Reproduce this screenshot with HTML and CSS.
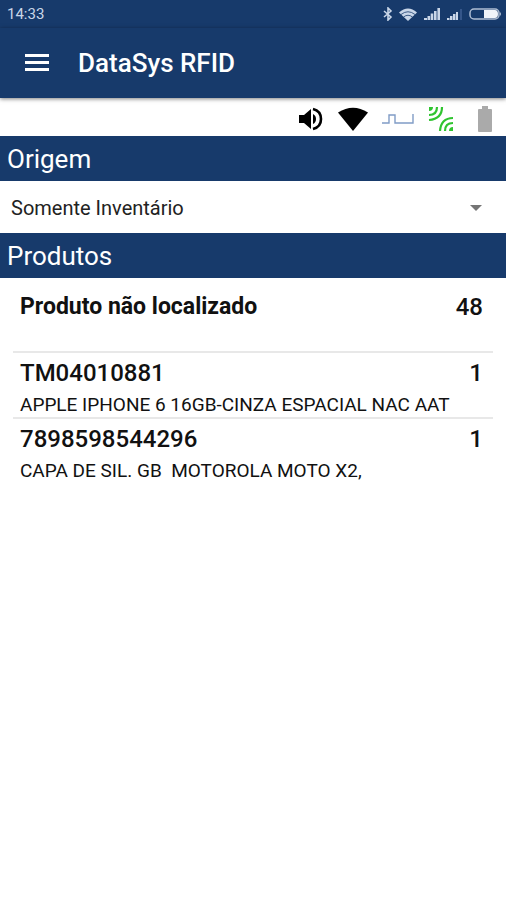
FILE: index.html
```html
<!DOCTYPE html>
<html lang="pt-BR">
    <head>
        <meta charset="UTF-8">
        <meta name="viewport" content="width=device-width, initial-scale=1">
        <title>DataSys RFID</title>
        <link rel="stylesheet" href="styles.css">
    </head>
    <body>
        <div class="statusbar">
            <span>14:33</span>
            <div class="status-icons">
                <svg width="10" height="14" viewBox="0 0 10 14"><path d="M1 4l7 6-3 3V1l3 3-7 6" fill="none" stroke="#c9d6e8" stroke-width="1.6"/></svg>
                <svg class="status-wifi" width="18" height="13" viewBox="0 0 18 13"><path d="M0 4.500Q9-3.500 18 4.500L9 13z" fill="#c9d6e8"/><path d="M2 6.500q7-5.500 14 0M4.500 9q4.500-3.500 9 0" fill="none" stroke="#173a6b" stroke-width="0.8"/></svg>
                <svg class="status-signal" width="17" height="12" viewBox="0 0 17 12"><path d="M0 10h3v2H0zM3.500 8h2.600v4H3.500zM6.700 5.500h2.600v6.500H6.700zM10 3h2.600v9H10zM13.400 0H16v12h-2.600z" fill="#c9d6e8"/></svg>
                <svg class="status-signal2" width="16" height="12" viewBox="0 0 16 12"><path d="M0 10h2.500v2H0zM3 8h2.500v4H3zM6 6h2.500v6H6zM9 4h2v8H9z" fill="#c9d6e8"/><path d="M13 1h2v11h-2z" fill="#35568a"/></svg>
                <svg class="status-battery" width="33" height="12" viewBox="0 0 33 12"><rect x="1" y="1" width="29" height="10" rx="4" fill="none" stroke="#aebdd3" stroke-width="1.500"/><path d="M15 2h11q3 0 3 4t-3 4H15z" fill="#f0f4fa"/><path d="M31 4q2 2 0 4z" fill="#aebdd3"/></svg>
            </div>
        </div>
        <header class="appbar">
            <button class="menu" type="button" aria-label="Menu">
                <svg width="26" height="18" viewBox="0 0 26 18"><path d="M1 1.500h24M1 8.500h24M1 15.500h24" stroke="#fff" stroke-width="2.800"/></svg>
            </button>
            <h1>DataSys RFID</h1>
        </header>
        <div class="reader">
            <svg width="26" height="24" viewBox="0 0 26 24"><path d="M1 8h5l7-6v20l-7-6H1z"/><path d="M15 7q3 1.500 3 5t-3 5z"/><path d="M15 2q8 2 8 10t-8 10" fill="none" stroke="#000" stroke-width="2.600"/></svg>
            <svg width="30" height="24" viewBox="0 0 30 24"><path d="M0 5.500Q15-4 30 5.500L15 24z"/></svg>
            <svg width="32" height="12" viewBox="0 0 32 12"><path d="M0 10h7V2h6v8h18V1" fill="none" stroke="#809cc6" stroke-width="1.400"/></svg>
            <svg width="26" height="26" viewBox="0 0 26 26"><g fill="none" stroke="#2fc42f" stroke-width="2.200"><path d="M1 9q8 0 8-8M1 14q13-1 13-13M12 25q1-13 13-13M17 25q0-8 8-8"/></g><path d="M1 1h4q0 4-4 4zM25 25h-4q0-4 4-4z" fill="#2fc42f"/></svg>
            <svg width="14" height="26" viewBox="0 0 14 26"><path d="M4 0h6v3h3q1 0 1 1v21q0 1-1 1H1q-1 0-1-1V4q0-1 1-1h3z" fill="#aaa"/></svg>
        </div>
        <main>
            <h2><label for="origem">Origem</label></h2>
            <div class="spinner">
                <select id="origem">
                    <option>Somente Inventário</option>
                </select>
            </div>
            <h2>Produtos</h2>
            <ul class="produtos">
                <li>
                    <div class="codigo"><span class="aviso">Produto não localizado</span><span>48</span></div>
                    <p></p>
                </li>
                <li>
                    <div class="codigo"><span>TM04010881</span><span>1</span></div>
                    <p>APPLE IPHONE 6 16GB-CINZA ESPACIAL NAC AAT</p>
                </li>
                <li>
                    <div class="codigo"><span>7898598544296</span><span>1</span></div>
                    <p>CAPA DE SIL. GB  MOTOROLA MOTO X2,</p>
                </li>
            </ul>
        </main>
    </body>
</html>
```
FILE: styles.css
```css
* {
    box-sizing: border-box;
}

body {
    margin: 0;
    background: #fff;
    color: #111;
    font-family: Roboto, "Liberation Sans", sans-serif;
}

svg {
    display: block;
}

.statusbar {
    display: flex;
    justify-content: space-between;
    align-items: center;
    height: 28px;
    padding: 0 4px 0 7px;
    background: #173a6b;
    color: #c9d6e8;
    font-size: 15px;
}

.status-icons {
    display: flex;
    align-items: center;
}

.status-wifi {
    margin-left: 6px;
}

.status-signal {
    margin-left: 7px;
}

.status-signal2 {
    margin-left: 6px;
}

.status-battery {
    margin-left: 6px;
}

.appbar {
    position: relative;
    display: flex;
    align-items: center;
    gap: 28px;
    height: 70px;
    padding: 0 24px;
    background: #173a6b;
    color: #fff;
    box-shadow: 0 1px 4px rgba(0,0,0,0.5);
}

.menu {
    padding: 0;
    border: 0;
    background: none;
}

h1 {
    margin: 0;
    font-size: 26px;
    font-weight: 500;
}

.reader {
    display: flex;
    justify-content: flex-end;
    align-items: center;
    gap: 14px;
    height: 38px;
    padding: 4px 14px 0 0;
}

.reader svg:last-child {
    margin-left: 10px;
}

h2 {
    margin: 0;
    padding: 2px 7px 0;
    background: #173a6b;
    color: #fff;
    font-size: 26px;
    font-weight: 400;
    line-height: 43px;
}

.spinner {
    position: relative;
}

.spinner::after {
    content: "";
    position: absolute;
    top: 24px;
    right: 24px;
    border: 6px solid transparent;
    border-top-color: #757575;
    border-bottom: 0;
    pointer-events: none;
}

select {
    display: block;
    width: 100%;
    height: 52px;
    padding: 2px 40px 0 11px;
    border: 0;
    background: #fff;
    color: #222;
    font-family: inherit;
    font-size: 20px;
    appearance: none;
}

.produtos {
    margin: 0;
    padding: 7px 13px;
    list-style: none;
}

.produtos li {
    height: 66px;
    padding: 3px 10px 0 7px;
}

.produtos li:first-child {
    padding-top: 5px;
}

.produtos li + li {
    border-top: 2px solid #e8e8e8;
}

.codigo {
    display: flex;
    justify-content: space-between;
    font-size: 24px;
    font-weight: 500;
    line-height: 34px;
}

.aviso {
    font-size: 23px;
    font-weight: 700;
}

.produtos p {
    margin: 0;
    font-size: 19px;
    line-height: 30px;
    white-space: pre;
}
```
